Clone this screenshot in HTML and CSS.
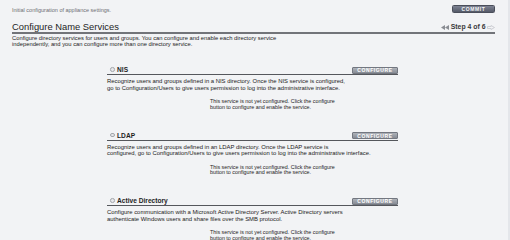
FILE: index.html
```
<!DOCTYPE html>
<html>
<head>
<meta charset="utf-8">
<link rel="stylesheet" href="styles.css">
</head>
<body>
<div class="page">
  <div class="topbar">
    <span class="subtitle">Initial configuration of appliance settings.</span>
    <span class="btn-commit">COMMIT</span>
  </div>
  <div class="header">
    <h1 class="heading">Configure Name Services</h1>
    <div class="step">
      <svg class="arrow" width="8" height="5" viewBox="0 0 8 5"><path d="M0 2.5 L4 0 V5 Z M4 2.5 L8 0 V5 Z" fill="#8a8d93"/></svg>
      <span>Step 4 of 6</span>
      <svg class="arrow" width="8" height="5" viewBox="0 0 8 5"><path d="M0.5 1.5 H4 V0.5 L7.5 2.5 L4 4.5 V3.5 H0.5 Z" fill="none" stroke="#c4c7cc" stroke-width="0.8"/></svg>
    </div>
  </div>
  <p class="intro">Configure directory services for users and groups. You can configure and enable each directory service<br>independently, and you can configure more than one directory service.</p>

  <div class="sections">
    <div class="section">
      <div class="sec-head">
        <div class="sec-title"><span class="bullet"></span>NIS</div>
        <span class="btn-configure">CONFIGURE</span>
      </div>
      <p class="sec-desc">Recognize users and groups defined in a NIS directory. Once the NIS service is configured,<br>go to Configuration/Users to give users permission to log into the administrative interface.</p>
      <p class="sec-status">This service is not yet configured. Click the configure<br>button to configure and enable the service.</p>
    </div>
    <div class="section">
      <div class="sec-head">
        <div class="sec-title"><span class="bullet"></span>LDAP</div>
        <span class="btn-configure">CONFIGURE</span>
      </div>
      <p class="sec-desc">Recognize users and groups defined in an LDAP directory. Once the LDAP service is<br>configured, go to Configuration/Users to give users permission to log into the administrative interface.</p>
      <p class="sec-status">This service is not yet configured. Click the configure<br>button to configure and enable the service.</p>
    </div>
    <div class="section">
      <div class="sec-head">
        <div class="sec-title"><span class="bullet"></span>Active Directory</div>
        <span class="btn-configure">CONFIGURE</span>
      </div>
      <p class="sec-desc">Configure communication with a Microsoft Active Directory Server. Active Directory servers<br>authenticate Windows users and share files over the SMB protocol.</p>
      <p class="sec-status">This service is not yet configured. Click the configure<br>button to configure and enable the service.</p>
    </div>
  </div>
</div>
</body>
</html>
```
FILE: styles.css
```
html, body {
  margin: 0;
  padding: 0;
  height: 100%;
  overflow: hidden;
}
body {
  background: #f2f3f5;
  font-family: "Liberation Sans", Arial, sans-serif;
  color: #2a2a2a;
  border-right: 2px solid #e4e6ea;
  box-sizing: border-box;
}
.page {
  padding: 5px 13px 0 12px;
}
.topbar {
  display: flex;
  justify-content: space-between;
  align-items: center;
  height: 8px;
}
.subtitle {
  font-size: 5.5px;
  color: #6d6f73;
  line-height: 8px;
  position: relative;
  top: 0.5px;
}
.btn-commit {
  width: 43px;
  height: 8px;
  box-sizing: border-box;
  border-radius: 1.5px;
  background: linear-gradient(#7d8292, #555a68);
  border: 0.5px solid #4a4e5a;
  color: #f4f5f7;
  font-size: 5px;
  font-weight: bold;
  letter-spacing: 0.6px;
  display: flex;
  align-items: center;
  justify-content: center;
}
.header {
  margin-top: 8px;
  display: flex;
  justify-content: space-between;
  align-items: flex-end;
  border-bottom: 2px solid #727479;
}
.heading {
  margin: 0;
  font-size: 9.4px;
  line-height: 11px;
  font-weight: normal;
  color: #1e1e1e;
}
.step {
  display: flex;
  align-items: center;
  gap: 1.5px;
  font-size: 6.9px;
  font-weight: bold;
  color: #3a3a3a;
  line-height: 8px;
  padding-bottom: 1px;
}
.arrow {
  display: block;
}
.intro {
  margin: 0;
  padding-top: 1px;
  font-size: 5.8px;
  line-height: 6px;
  color: #222;
  white-space: nowrap;
}
.sections {
  margin: 18px 0 0 95px;
  width: 291px;
}
.section + .section {
  margin-top: 20.5px;
}
.sec-head {
  display: flex;
  justify-content: space-between;
  align-items: flex-end;
  height: 9px;
  border-bottom: 1px solid #55575c;
}
.sec-title {
  display: flex;
  align-items: center;
  font-size: 6.6px;
  font-weight: bold;
  color: #1e1e1e;
  line-height: 9px;
}
.bullet {
  width: 2.6px;
  height: 2.6px;
  border-radius: 50%;
  border: 0.5px solid #a3a6ab;
  background: #e6e7ea;
  margin: 0 2.5px 0 3px;
}
.btn-configure {
  width: 46px;
  height: 7px;
  box-sizing: border-box;
  background: linear-gradient(#aeb2b9, #878b94);
  border: 0.5px solid #737780;
  border-radius: 1px;
  color: #ffffff;
  font-size: 5px;
  font-weight: bold;
  letter-spacing: 0.6px;
  display: flex;
  align-items: center;
  justify-content: center;
  margin-bottom: 0.5px;
}
.sec-desc {
  margin: 3px 0 0;
  font-size: 5.9px;
  line-height: 6.5px;
  color: #222;
  white-space: nowrap;
}
.sec-status {
  margin: 8px 0 0 103px;
  font-size: 5.35px;
  line-height: 5.5px;
  color: #222;
  white-space: nowrap;
}
```
